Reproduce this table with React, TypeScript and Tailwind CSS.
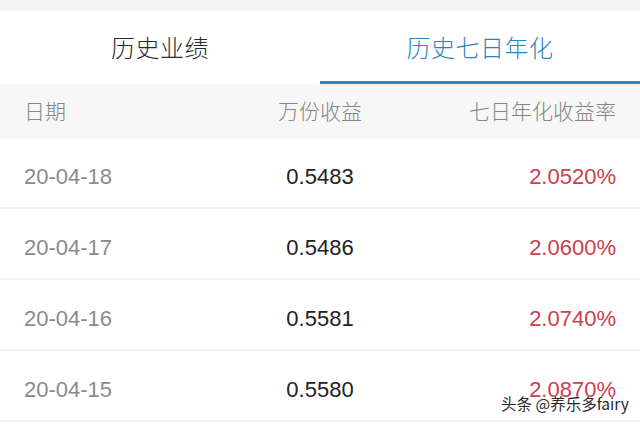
import React from "react";

const rows = [
  { d: "20-04-18", v: "0.5483", p: "2.0520%" },
  { d: "20-04-17", v: "0.5486", p: "2.0600%" },
  { d: "20-04-16", v: "0.5581", p: "2.0740%" },
  { d: "20-04-15", v: "0.5580", p: "2.0870%" },
];

const cjk = { fontFamily: '"Noto Sans CJK SC", "Noto Sans", sans-serif' };
const num = { fontFamily: '"Liberation Sans", Arial, "Noto Sans CJK SC", sans-serif' };

export default function App() {
  return (
    <div className="relative w-[640px] h-[427px] overflow-hidden bg-white" style={cjk}>
      <div className="h-[10px] bg-[#f3f3f3] border-b border-[#ececec]" />
      <div className="flex h-[74px] bg-white">
        <div className="flex-1 flex items-center justify-center text-[24px] text-[#2a2a2a] font-light tracking-[0.5px]">
          历史业绩
        </div>
        <div className="flex-1 flex items-center justify-center text-[24px] text-[#2f86bd] font-light tracking-[0.5px] border-b-[3px] border-[#2b88c8] pt-[3px]">
          历史七日年化
        </div>
      </div>
      <div className="grid grid-cols-3 items-center h-[54px] px-6 bg-[#f7f7f7] border-b border-[#efefef] text-[21px] text-[#858585] font-light">
        <div>日期</div>
        <div className="text-center">万份收益</div>
        <div className="text-right">七日年化收益率</div>
      </div>
      {rows.map((r) => (
        <div
          key={r.d}
          className="grid grid-cols-3 items-center h-[71px] px-6 border-b-2 border-[#f2f2f2] text-[22px] pt-[7px]"
          style={num}
        >
          <div className="text-[#8b8b8b]">{r.d}</div>
          <div className="text-center text-[#222222]">{r.v}</div>
          <div className="text-right text-[#c9404f]">{r.p}</div>
        </div>
      ))}
      <div
        className="absolute left-[501px] top-[396px] text-[15.5px] text-[#2b2b2b] leading-none"
        style={{ ...cjk, textShadow: "0 0 2px #fff, 0 0 2px #fff" }}
      >
        头条 @养乐多fairy
      </div>
    </div>
  );
}
